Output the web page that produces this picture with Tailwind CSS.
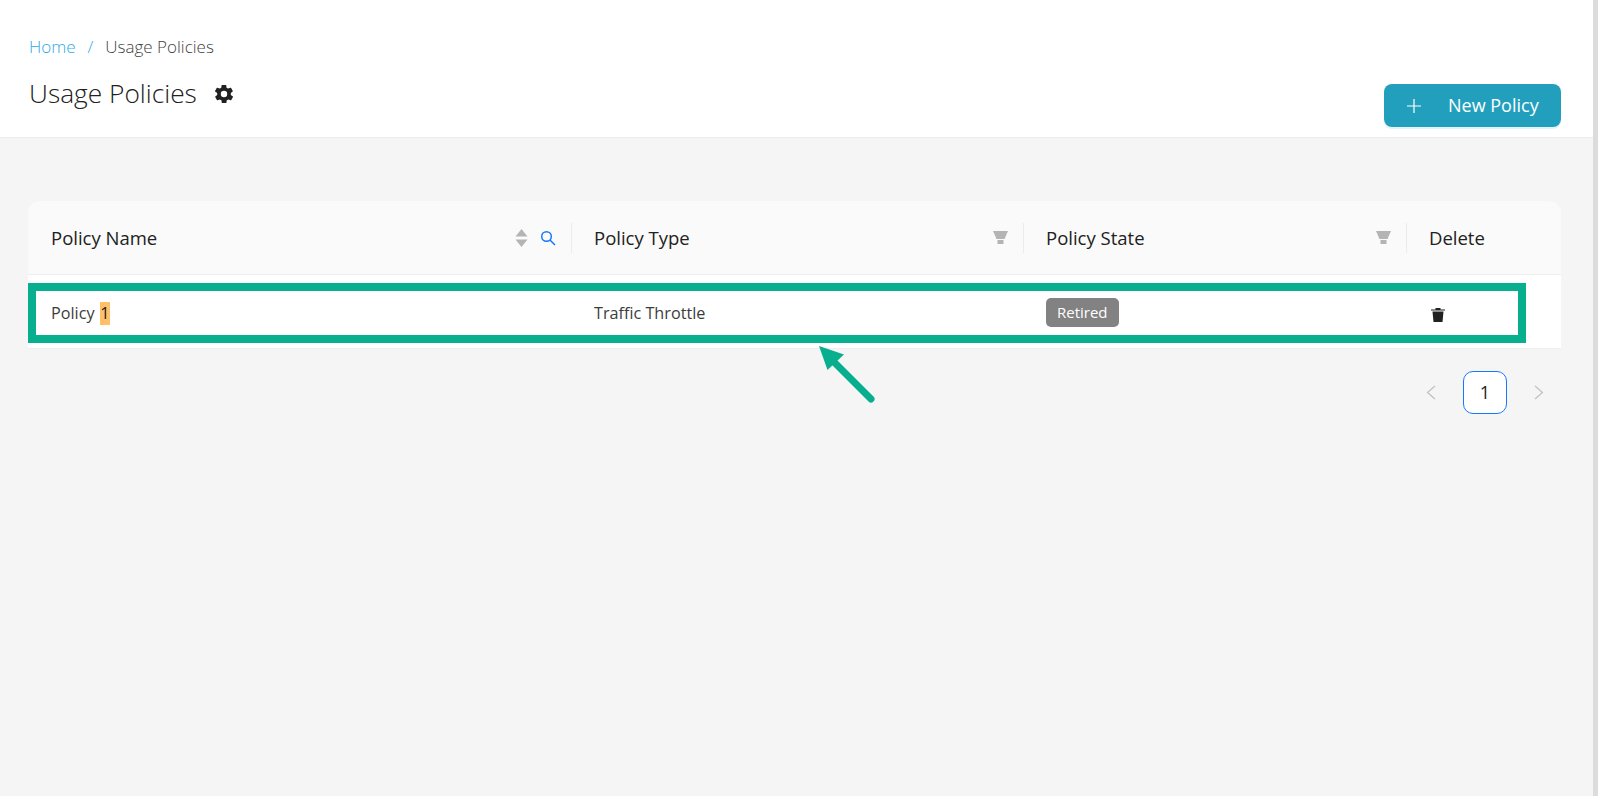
<!DOCTYPE html>
<html lang="en">
<head>
    <meta charset="UTF-8">
    <title>Usage Policies</title>
    <script src="https://cdn.jsdelivr.net/npm/@tailwindcss/browser@4"></script>
</head>
<body class="bg-[#f5f5f5] font-['Open_Sans',sans-serif] text-[#212121] overflow-hidden">
    <div class="relative h-[796px] w-[1593px]">
        <!-- Page header -->
        <header class="relative h-[138px] bg-white border-b border-[#ececec] px-[29px] pt-[35px]">
            <nav class="flex items-center text-[17px] leading-[24px] font-light text-[#3f3f3f]">
                <a class="text-[#30a9ea]">Home</a>
                <span class="mx-[12px] text-[#30a9ea]">/</span>
                <span>Usage Policies</span>
            </nav>
            <div class="mt-[18px] flex items-center">
                <h1 class="text-[26.3px] leading-[32px] font-light">Usage Policies</h1>
                <svg class="ml-[16px] mt-[2px] w-[22px] h-[22px] text-[#212121]" viewBox="0 0 24 24" fill="currentColor"><path d="M19.4 13a7.5 7.5 0 0 0 0-2l2.1-1.6a.5.5 0 0 0 .1-.6l-2-3.5a.5.5 0 0 0-.6-.2l-2.5 1a7.3 7.3 0 0 0-1.7-1l-.4-2.6a.5.5 0 0 0-.5-.4h-4a.5.5 0 0 0-.5.4l-.4 2.6a7.3 7.3 0 0 0-1.7 1l-2.5-1a.5.5 0 0 0-.6.2l-2 3.5a.5.5 0 0 0 .1.6L4.6 11a7.5 7.5 0 0 0 0 2l-2.1 1.6a.5.5 0 0 0-.1.6l2 3.5c.1.2.4.3.6.2l2.5-1c.5.4 1.100.7 1.700 1l.4 2.600c0 .2.2.4.5.4h4c.3 0 .5-.2.5-.4l.4-2.600c.6-.3 1.200-.6 1.700-1l2.500 1c.2.100.5 0 .6-.2l2-3.500a.5.5 0 0 0-.1-.6zM12 15.500a3.500 3.500 0 1 1 0-7 3.500 3.500 0 0 1 0 7z"/></svg>
            </div>
            <button class="absolute left-[1384px] top-[84px] w-[177px] h-[43px] rounded-[8px] bg-[#229fbd] text-white text-[18px] flex items-center shadow-[0_2px_0_rgba(34,159,189,0.12)]">
                <svg class="ml-[23px] w-[14px] h-[14px]" viewBox="0 0 14 14" fill="none" stroke="currentColor" stroke-width="1.2"><path d="M7 0v14M0 7h14"/></svg>
                <span class="ml-[27px]">New Policy</span>
            </button>
        </header>

        <!-- Policies table -->
        <main class="px-[28px] pt-[63px] pr-[32px]">
            <div class="rounded-t-[12px] overflow-hidden">
                <div class="flex h-[74px] items-center bg-[#fafafa] border-b border-[#eeeeee] text-[18.5px] font-medium">
                    <div class="w-[544px] flex items-center pl-[23px] pr-[15px] border-r border-[#ececec] h-[30px]">
                        <span class="flex-1">Policy Name</span>
                        <svg class="w-[13px] h-[20px] text-[#b4b4b4] mr-[12px]" viewBox="0 0 13 20" fill="currentColor"><path d="M6.500 1 12.500 8.500H.5zM6.500 19 .5 11.500h12z"/></svg>
                        <svg class="w-[16px] h-[16px] text-[#1677ff]" viewBox="0 0 16 16" fill="none" stroke="currentColor" stroke-width="1.500"><circle cx="6.500" cy="6.500" r="4.800"/><path d="m10 10 5 5"/></svg>
                    </div>
                    <div class="w-[452px] flex items-center pl-[22px] pr-[15px] border-r border-[#ececec] h-[30px]">
                        <span class="flex-1">Policy Type</span>
                        <svg class="w-[15px] h-[13px] text-[#b4b4b4]" viewBox="0 0 15 13" fill="currentColor"><path d="M0 0h15l-3.500 8h-8zM4.500 9h6v4h-6z"/></svg>
                    </div>
                    <div class="w-[383px] flex items-center pl-[22px] pr-[15px] border-r border-[#ececec] h-[30px]">
                        <span class="flex-1">Policy State</span>
                        <svg class="w-[15px] h-[13px] text-[#b4b4b4]" viewBox="0 0 15 13" fill="currentColor"><path d="M0 0h15l-3.500 8h-8zM4.500 9h6v4h-6z"/></svg>
                    </div>
                    <div class="flex-1 pl-[22px]">Delete</div>
                </div>
                <div class="flex h-[74px] items-center bg-white border-b border-[#eeeeee] text-[16.2px] text-[#3c3c3c]">
                    <div class="w-[544px] pl-[23px] pt-[4px]">Policy <span class="inline-block leading-[23px] ml-[1px] px-[0.5px] bg-[#ffc069] text-[#212121]">1</span></div>
                    <div class="w-[452px] pl-[22px] pt-[4px]">Traffic Throttle</div>
                    <div class="w-[383px] pl-[22px] pt-[2px]">
                        <span class="inline-block h-[29px] px-[11px] rounded-[5px] bg-[#828282] text-white text-[15px] leading-[29px]">Retired</span>
                    </div>
                    <div class="flex-1 pl-[24px] pt-[5px]">
                        <svg class="w-[14px] h-[15px] text-[#212121]" viewBox="0 0 14 15" fill="currentColor"><path d="M0 2.500h14v1H0zM4.500 1h5v1.500h-5zM1.500 4.500h11L11.500 15h-9z"/></svg>
                    </div>
                </div>
            </div>
            <div class="flex justify-end items-center mt-[22px] pr-[17px]">
                <svg class="w-[10px] h-[15px] text-[#c0c0c0]" viewBox="0 0 10 15" fill="none" stroke="currentColor" stroke-width="1.200"><path d="M9 1 1.500 7.500 9 14"/></svg>
                <div class="w-[44px] h-[43px] mx-[27px] rounded-[10px] border border-[#1677ff] bg-white flex items-center justify-center text-[18px] font-medium">1</div>
                <svg class="w-[10px] h-[15px] text-[#c0c0c0]" viewBox="0 0 10 15" fill="none" stroke="currentColor" stroke-width="1.200"><path d="M1 1 8.500 7.500 1 14"/></svg>
            </div>
        </main>

        <!-- Annotation over the row -->
        <div class="absolute left-[28px] top-[283px] w-[1498px] h-[60px] border-[8px] border-[#07af8f]"></div>
        <svg class="absolute left-[815px] top-[343px] w-[65px] h-[65px]" viewBox="0 0 65 65" fill="none">
            <path d="M56 56 20 20" stroke="#07af8f" stroke-width="7" stroke-linecap="round"/>
            <path d="M4 3 29 11.500 12.500 27z" fill="#07af8f"/>
        </svg>
    </div>
    <div class="fixed top-0 right-0 w-[5px] h-full bg-[#dcdcdc]"></div>
</body>
</html>
